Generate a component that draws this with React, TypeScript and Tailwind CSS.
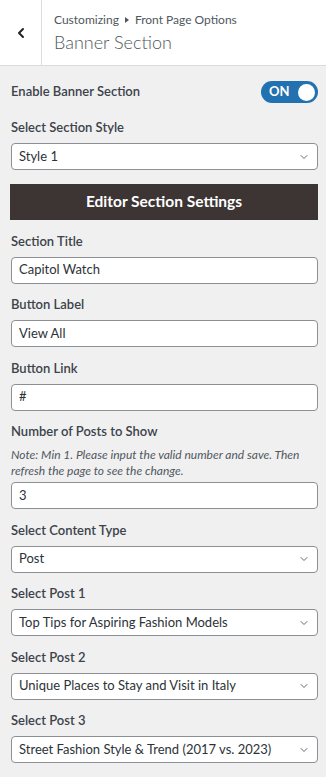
import { ChevronLeft, ChevronDown } from 'lucide-react'

const font = { fontFamily: 'Lato, "Noto Sans", sans-serif' }

function Label({ children }: { children: React.ReactNode }) {
  return <div className="text-[13px] font-semibold text-[#3c434a] leading-[20px] mb-[6px]">{children}</div>
}

function TextField({ value }: { value: string }) {
  return (
    <div className="h-[27px] bg-white border border-[#8c8f94] rounded-[4px] flex items-center pl-[7px] text-[13px] text-[#2c3338]">
      {value}
    </div>
  )
}

function SelectField({ value }: { value: string }) {
  return (
    <div className="h-[27px] bg-white border border-[#8c8f94] rounded-[4px] flex items-center justify-between pl-[7px] pr-[7px] text-[13px] text-[#2c3338]">
      <span>{value}</span>
      <ChevronDown className="w-[12px] h-[12px] text-[#50575e]" strokeWidth={1.75} />
    </div>
  )
}

const fields = [
  { label: 'Section Title', value: 'Capitol Watch' },
  { label: 'Button Label', value: 'View All' },
  { label: 'Button Link', value: '#' },
]

const posts = [
  { label: 'Select Content Type', value: 'Post' },
  { label: 'Select Post 1', value: 'Top Tips for Aspiring Fashion Models' },
  { label: 'Select Post 2', value: 'Unique Places to Stay and Visit in Italy' },
  { label: 'Select Post 3', value: 'Street Fashion Style & Trend (2017 vs. 2023)' },
]

export default function App() {
  return (
    <div className="w-[326px] min-h-[777px] bg-[#f0f0f1]" style={font}>
      <div className="h-[66px] bg-white border-b border-[#dcdcde] flex">
        <div className="w-[42px] border-r border-[#dcdcde] flex items-center justify-center">
          <ChevronLeft className="w-[16px] h-[16px] text-[#1d2327]" strokeWidth={3} />
        </div>
        <div className="pl-[12px] pt-[11px]">
          <div className="text-[12px] text-[#50575e] leading-[18px] flex items-center">
            Customizing
            <span className="mx-[6px] w-0 h-0 border-y-[3px] border-y-transparent border-l-[4px] border-l-[#50575e]" />
            Front Page Options
          </div>
          <div className="text-[18px] text-[#50575e] leading-[26px] font-light">Banner Section</div>
        </div>
      </div>

      <div className="pl-[11px] pr-[8px] pt-[15px]">
        <div className="flex items-center justify-between h-[22px]">
          <div className="text-[13px] font-semibold text-[#3c434a]">Enable Banner Section</div>
          <div className="w-[57px] h-[22px] rounded-full bg-[#2271b1] flex items-center justify-between pl-[8px] pr-[3px]">
            <span className="text-white text-[13px] font-bold">ON</span>
            <span className="w-[17px] h-[17px] rounded-full bg-white" />
          </div>
        </div>

        <div className="mt-[14px]">
          <Label>Select Section Style</Label>
          <SelectField value="Style 1" />
        </div>

        <div className="mt-[14px] -ml-[1px] h-[36px] bg-[#3c3533] flex items-center justify-center text-white text-[15.5px] font-bold">
          Editor Section Settings
        </div>

        {fields.map((f) => (
          <div key={f.label} className="mt-[10.5px]">
            <Label>{f.label}</Label>
            <TextField value={f.value} />
          </div>
        ))}

        <div className="mt-[10.5px]">
          <Label>Number of Posts to Show</Label>
          <div className="text-[12px] italic text-[#50575e] leading-[16px] mb-[3px]">
            Note: Min 1. Please input the valid number and save. Then refresh the page to see the change.
          </div>
          <TextField value="3" />
        </div>

        {posts.map((p) => (
          <div key={p.label} className="mt-[10.5px]">
            <Label>{p.label}</Label>
            <SelectField value={p.value} />
          </div>
        ))}
      </div>
    </div>
  )
}
